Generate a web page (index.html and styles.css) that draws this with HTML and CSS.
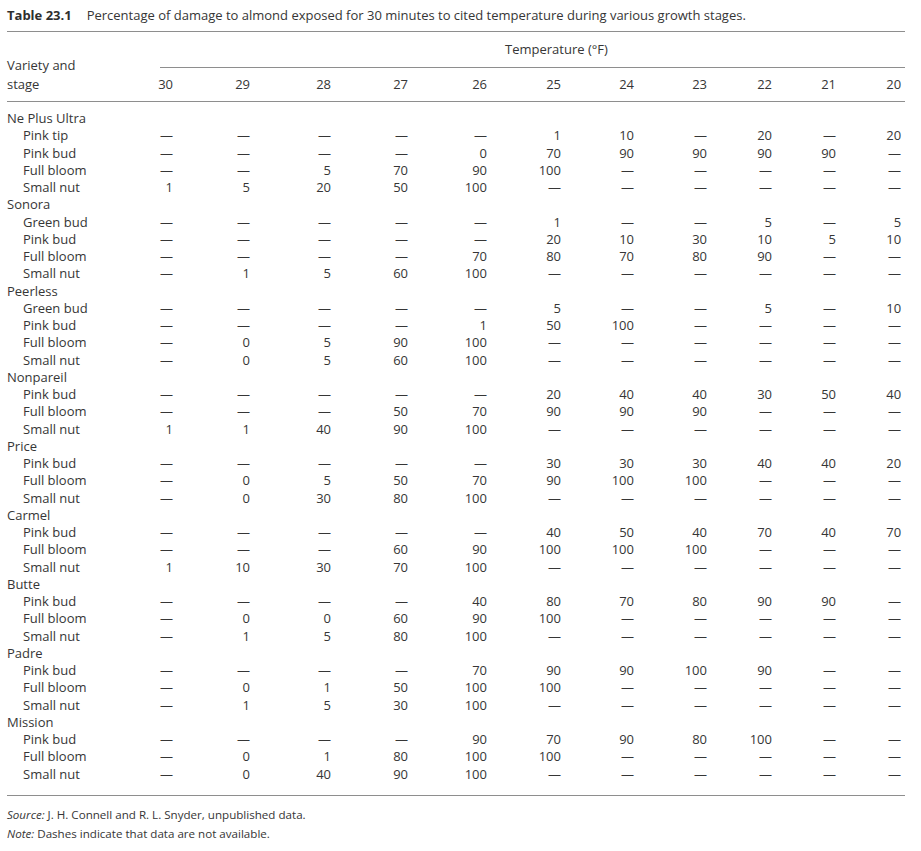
FILE: index.html
```html
<!DOCTYPE html>
<html lang="en">
<head>
<meta charset="utf-8">
<title>Table 23.1</title>
<link rel="stylesheet" href="styles.css">
</head>
<body>
<div class="page">
  <p class="caption"><span class="caption-label">Table 23.1</span>Percentage of damage to almond exposed for 30 minutes to cited temperature during various growth stages.</p>
  <div class="table-wrap">
    <table class="data">
      <colgroup>
        <col class="c-label"><col class="c30"><col class="c29"><col class="c28"><col class="c27"><col class="c26"><col class="c25"><col class="c24"><col class="c23"><col class="c22"><col class="c21"><col class="c20">
      </colgroup>
      <thead>
        <tr>
          <th class="head-label" rowspan="2">Variety and<br>stage</th>
          <th class="head-temp" colspan="11"><div class="temp-rule">Temperature (°F)</div></th>
        </tr>
        <tr class="head-nums">
          <th>30</th><th>29</th><th>28</th><th>27</th><th>26</th><th>25</th><th>24</th><th>23</th><th>22</th><th>21</th><th>20</th>
        </tr>
      </thead>
      <tbody>
        <tr class="first"><td class="variety" colspan="12">Ne Plus Ultra</td></tr>
        <tr><td class="stage">Pink tip</td><td>—</td><td>—</td><td>—</td><td>—</td><td>—</td><td>1</td><td>10</td><td>—</td><td>20</td><td>—</td><td>20</td></tr>
        <tr><td class="stage">Pink bud</td><td>—</td><td>—</td><td>—</td><td>—</td><td>0</td><td>70</td><td>90</td><td>90</td><td>90</td><td>90</td><td>—</td></tr>
        <tr><td class="stage">Full bloom</td><td>—</td><td>—</td><td>5</td><td>70</td><td>90</td><td>100</td><td>—</td><td>—</td><td>—</td><td>—</td><td>—</td></tr>
        <tr><td class="stage">Small nut</td><td>1</td><td>5</td><td>20</td><td>50</td><td>100</td><td>—</td><td>—</td><td>—</td><td>—</td><td>—</td><td>—</td></tr>

        <tr><td class="variety" colspan="12">Sonora</td></tr>
        <tr><td class="stage">Green bud</td><td>—</td><td>—</td><td>—</td><td>—</td><td>—</td><td>1</td><td>—</td><td>—</td><td>5</td><td>—</td><td>5</td></tr>
        <tr><td class="stage">Pink bud</td><td>—</td><td>—</td><td>—</td><td>—</td><td>—</td><td>20</td><td>10</td><td>30</td><td>10</td><td>5</td><td>10</td></tr>
        <tr><td class="stage">Full bloom</td><td>—</td><td>—</td><td>—</td><td>—</td><td>70</td><td>80</td><td>70</td><td>80</td><td>90</td><td>—</td><td>—</td></tr>
        <tr><td class="stage">Small nut</td><td>—</td><td>1</td><td>5</td><td>60</td><td>100</td><td>—</td><td>—</td><td>—</td><td>—</td><td>—</td><td>—</td></tr>

        <tr><td class="variety" colspan="12">Peerless</td></tr>
        <tr><td class="stage">Green bud</td><td>—</td><td>—</td><td>—</td><td>—</td><td>—</td><td>5</td><td>—</td><td>—</td><td>5</td><td>—</td><td>10</td></tr>
        <tr><td class="stage">Pink bud</td><td>—</td><td>—</td><td>—</td><td>—</td><td>1</td><td>50</td><td>100</td><td>—</td><td>—</td><td>—</td><td>—</td></tr>
        <tr><td class="stage">Full bloom</td><td>—</td><td>0</td><td>5</td><td>90</td><td>100</td><td>—</td><td>—</td><td>—</td><td>—</td><td>—</td><td>—</td></tr>
        <tr><td class="stage">Small nut</td><td>—</td><td>0</td><td>5</td><td>60</td><td>100</td><td>—</td><td>—</td><td>—</td><td>—</td><td>—</td><td>—</td></tr>

        <tr><td class="variety" colspan="12">Nonpareil</td></tr>
        <tr><td class="stage">Pink bud</td><td>—</td><td>—</td><td>—</td><td>—</td><td>—</td><td>20</td><td>40</td><td>40</td><td>30</td><td>50</td><td>40</td></tr>
        <tr><td class="stage">Full bloom</td><td>—</td><td>—</td><td>—</td><td>50</td><td>70</td><td>90</td><td>90</td><td>90</td><td>—</td><td>—</td><td>—</td></tr>
        <tr><td class="stage">Small nut</td><td>1</td><td>1</td><td>40</td><td>90</td><td>100</td><td>—</td><td>—</td><td>—</td><td>—</td><td>—</td><td>—</td></tr>

        <tr><td class="variety" colspan="12">Price</td></tr>
        <tr><td class="stage">Pink bud</td><td>—</td><td>—</td><td>—</td><td>—</td><td>—</td><td>30</td><td>30</td><td>30</td><td>40</td><td>40</td><td>20</td></tr>
        <tr><td class="stage">Full bloom</td><td>—</td><td>0</td><td>5</td><td>50</td><td>70</td><td>90</td><td>100</td><td>100</td><td>—</td><td>—</td><td>—</td></tr>
        <tr><td class="stage">Small nut</td><td>—</td><td>0</td><td>30</td><td>80</td><td>100</td><td>—</td><td>—</td><td>—</td><td>—</td><td>—</td><td>—</td></tr>

        <tr><td class="variety" colspan="12">Carmel</td></tr>
        <tr><td class="stage">Pink bud</td><td>—</td><td>—</td><td>—</td><td>—</td><td>—</td><td>40</td><td>50</td><td>40</td><td>70</td><td>40</td><td>70</td></tr>
        <tr><td class="stage">Full bloom</td><td>—</td><td>—</td><td>—</td><td>60</td><td>90</td><td>100</td><td>100</td><td>100</td><td>—</td><td>—</td><td>—</td></tr>
        <tr><td class="stage">Small nut</td><td>1</td><td>10</td><td>30</td><td>70</td><td>100</td><td>—</td><td>—</td><td>—</td><td>—</td><td>—</td><td>—</td></tr>

        <tr><td class="variety" colspan="12">Butte</td></tr>
        <tr><td class="stage">Pink bud</td><td>—</td><td>—</td><td>—</td><td>—</td><td>40</td><td>80</td><td>70</td><td>80</td><td>90</td><td>90</td><td>—</td></tr>
        <tr><td class="stage">Full bloom</td><td>—</td><td>0</td><td>0</td><td>60</td><td>90</td><td>100</td><td>—</td><td>—</td><td>—</td><td>—</td><td>—</td></tr>
        <tr><td class="stage">Small nut</td><td>—</td><td>1</td><td>5</td><td>80</td><td>100</td><td>—</td><td>—</td><td>—</td><td>—</td><td>—</td><td>—</td></tr>

        <tr><td class="variety" colspan="12">Padre</td></tr>
        <tr><td class="stage">Pink bud</td><td>—</td><td>—</td><td>—</td><td>—</td><td>70</td><td>90</td><td>90</td><td>100</td><td>90</td><td>—</td><td>—</td></tr>
        <tr><td class="stage">Full bloom</td><td>—</td><td>0</td><td>1</td><td>50</td><td>100</td><td>100</td><td>—</td><td>—</td><td>—</td><td>—</td><td>—</td></tr>
        <tr><td class="stage">Small nut</td><td>—</td><td>1</td><td>5</td><td>30</td><td>100</td><td>—</td><td>—</td><td>—</td><td>—</td><td>—</td><td>—</td></tr>

        <tr><td class="variety" colspan="12">Mission</td></tr>
        <tr><td class="stage">Pink bud</td><td>—</td><td>—</td><td>—</td><td>—</td><td>90</td><td>70</td><td>90</td><td>80</td><td>100</td><td>—</td><td>—</td></tr>
        <tr><td class="stage">Full bloom</td><td>—</td><td>0</td><td>1</td><td>80</td><td>100</td><td>100</td><td>—</td><td>—</td><td>—</td><td>—</td><td>—</td></tr>
        <tr class="last"><td class="stage">Small nut</td><td>—</td><td>0</td><td>40</td><td>90</td><td>100</td><td>—</td><td>—</td><td>—</td><td>—</td><td>—</td><td>—</td></tr>
      </tbody>
    </table>
  </div>
  <div class="notes">
    <p><em>Source:</em> J. H. Connell and R. L. Snyder, unpublished data.</p>
    <p><em>Note:</em> Dashes indicate that data are not available.</p>
  </div>
</div>
</body>
</html>
```

FILE: styles.css
```css
html, body {
  margin: 0;
  padding: 0;
  background: #ffffff;
}

body {
  font-family: "Open Sans", "Noto Sans", sans-serif;
  font-size: 13px;
  color: #363636;
}

.page {
  width: 898px;
  padding: 6px 0 0 7px;
}

.caption {
  margin: 0 0 7px 0;
  line-height: 18px;
  white-space: nowrap;
}

.caption-label {
  font-weight: 700;
  color: #2e2e2e;
  margin-right: 15px;
}

.table-wrap {
  border-top: 1px solid #8e8e8e;
  border-bottom: 1px solid #8e8e8e;
}

.data {
  border-collapse: separate;
  border-spacing: 0;
  table-layout: fixed;
  width: 898px;
}

.c-label { width: 103px; }
.c30 { width: 63px; }
.c29 { width: 77px; }
.c28 { width: 81px; }
.c27 { width: 77px; }
.c26 { width: 79px; }
.c25 { width: 74px; }
.c24 { width: 73px; }
.c23 { width: 73px; }
.c22 { width: 65px; }
.c21 { width: 64px; }
.c20 { width: 69px; }

.data th {
  font-weight: 400;
  padding: 0;
}

.head-label {
  text-align: left;
  vertical-align: bottom;
  line-height: 19px;
  padding-bottom: 7px !important;
  border-bottom: 1px solid #8e8e8e;
}

.head-temp {
  vertical-align: top;
}

.temp-rule {
  box-sizing: border-box;
  height: 36px;
  margin-left: 50px;
  padding-left: 345px;
  line-height: 35px;
  text-align: left;
  border-bottom: 1px solid #8e8e8e;
}

.head-nums th {
  line-height: 33px;
  text-align: right;
  border-bottom: 1px solid #8e8e8e;
}

.head-nums th:last-child {
  padding-right: 4px;
}

.data td {
  padding: 0;
  line-height: 17.25px;
  text-align: right;
  white-space: nowrap;
}

.data td:last-child {
  padding-right: 4px;
}

.data td.variety {
  text-align: left;
  padding-right: 0;
}

.data td.stage {
  text-align: left;
  padding-left: 16px;
}

.data tr.first td {
  padding-top: 8px;
}

.data tr.last td {
  padding-bottom: 12px;
}

.notes {
  padding-top: 9px;
  font-size: 11.6px;
}

.notes p {
  margin: 0;
  line-height: 19px;
}

.notes em {
  font-style: italic;
}
```
